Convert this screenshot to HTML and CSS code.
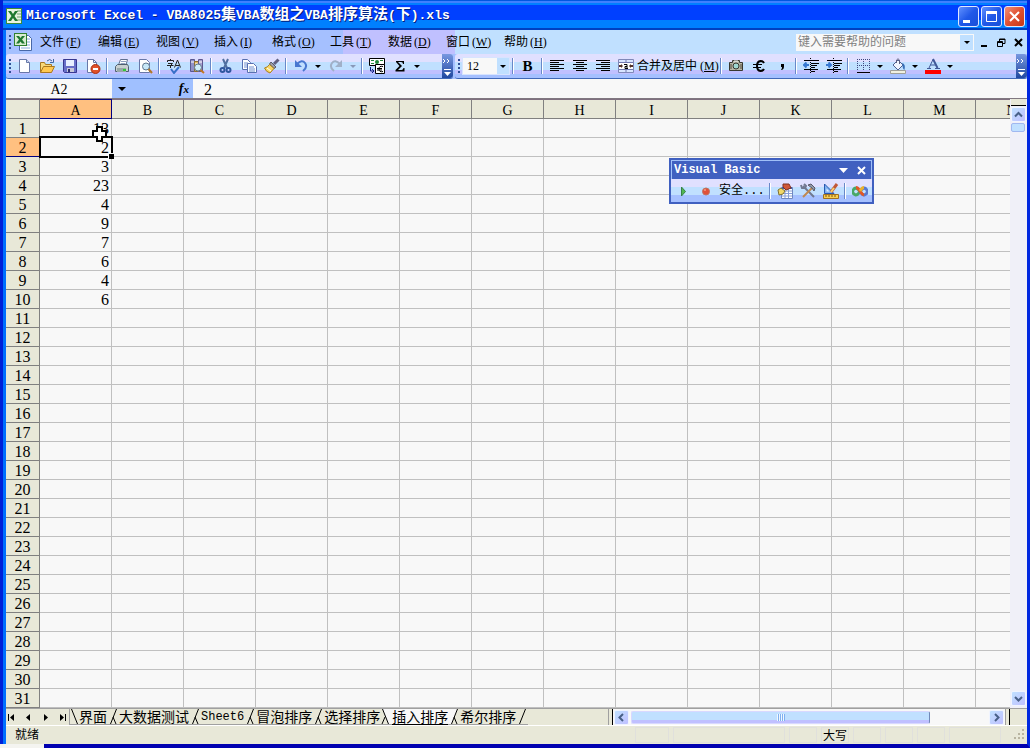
FILE: index.html
```html
<!DOCTYPE html>
<html lang="zh-CN">
<head>
<meta charset="utf-8">
<title>Microsoft Excel</title>
<link rel="stylesheet" href="styles.css">
</head>
<body>
<div class="window">
  <header class="titlebar">
    <svg class="app-icon" width="16" height="16" viewBox="0 0 16 16"><rect x=".5" y=".5" width="15" height="15" fill="#e8f4e0" stroke="#3c8c3c"/><path d="M11 3h4M11 6h4M11 9h4M11 12h4" stroke="#70a070"/><path d="M2 3h3l2 3 2-3h3L8.500 8 12 13H9L7 10l-2 3H2l3.500-5z" fill="#207830"/></svg>
    <h1 class="title">Microsoft Excel - VBA8025<span class="han">集</span>VBA<span class="han">数组之</span>VBA<span class="han">排序算法</span>(<span class="han">下</span>).xls</h1>
    <div class="win-buttons">
      <button class="win-btn" aria-label="最小化"><svg width="19" height="19" viewBox="0 0 19 19"><path d="M4 13h7v3H4z" fill="#fff"/></svg></button>
      <button class="win-btn" aria-label="最大化"><svg width="19" height="19" viewBox="0 0 19 19"><path d="M4.500 5.500h10v9h-10z" fill="none" stroke="#fff"/><path d="M4 4h11v3H4z" fill="#fff"/></svg></button>
      <button class="win-btn close" aria-label="关闭"><svg width="19" height="19" viewBox="0 0 19 19"><path d="M5 5l9 9M14 5l-9 9" stroke="#fff" stroke-width="2"/></svg></button>
    </div>
  </header>

  <nav class="menubar">
    <span class="grip"></span>
    <svg class="doc-icon" width="18" height="18" viewBox="0 0 18 18"><path d="M5.500 2.500h9l3 3v12h-12z" fill="#fff" stroke="#4868a8"/><path d="M12 6h4M12 9h4M12 12h4M7 15h9" stroke="#88a8d8"/><rect x=".5" y=".5" width="12" height="12" fill="#d8ecd0" stroke="#308030"/><path d="M2 3h3l1.500 2L8 3h3L8 6.500l3 4H8L6.500 8.500 5 10.500H2l3-4z" fill="#207830"/></svg>
    <button class="menu">文件<span>(<u>F</u>)</span></button>
    <button class="menu">编辑<span>(<u>E</u>)</span></button>
    <button class="menu">视图<span>(<u>V</u>)</span></button>
    <button class="menu">插入<span>(<u>I</u>)</span></button>
    <button class="menu">格式<span>(<u>O</u>)</span></button>
    <button class="menu">工具<span>(<u>T</u>)</span></button>
    <button class="menu">数据<span>(<u>D</u>)</span></button>
    <button class="menu">窗口<span>(<u>W</u>)</span></button>
    <button class="menu">帮助<span>(<u>H</u>)</span></button>
    <div class="help-box">
      <input type="text" aria-label="帮助" placeholder="键入需要帮助的问题">
      <button class="drop" aria-label="展开"><i class="tri"></i></button>
    </div>
    <div class="doc-buttons">
      <button aria-label="最小化窗口"><svg width="9" height="9"><path d="M1 7h6v2H1z"/></svg></button>
      <button aria-label="还原窗口"><svg width="9" height="9"><path d="M2.500 3V1H8v4.500H6M2.500 1.500H8M.5 3.500h5v5h-5zM.5 4.500h5" fill="none" stroke="#000"/></svg></button>
      <button aria-label="关闭窗口"><svg width="9" height="9"><path d="M1 1l7 7M8 1L1 8" stroke="#000" stroke-width="2"/></svg></button>
    </div>
  </nav>

  <div class="toolbars">
    <div class="toolbar standard">
      <span class="grip"></span>
      <button class="tb" aria-label="新建"><svg width="16" height="16"><path d="M3.500 1.500h7l3 3v10h-10z" fill="#fff" stroke="#6878a8"/><path d="M10.500 1.500v3h3" fill="#c8d8f0" stroke="#6878a8"/></svg></button>
      <button class="tb" aria-label="打开"><svg width="16" height="16"><path d="M1.500 14V4.500h4l1 2h6V14z" fill="#f8d878" stroke="#a87820"/><path d="M1.500 14.500l3-6h11l-3 6z" fill="#ffc850" stroke="#a87820"/><path d="M8 3q3-3 5 0M14.500 1v3.500H11" fill="none" stroke="#4068a0"/></svg></button>
      <button class="tb" aria-label="保存"><svg width="16" height="16"><path d="M1.500 1.500h13v13h-12l-1-1z" fill="#6870c8" stroke="#383890"/><path d="M4 2h8v6H4z" fill="#e8f0ff"/><path d="M5 10h7v4H5z" fill="#c8c8d8"/><path d="M6 11h2v3H6z" fill="#303070"/></svg></button>
      <button class="tb" aria-label="权限"><svg width="16" height="16"><path d="M2.500 1.500h6l3 3v10h-9z" fill="#fff" stroke="#6878a8"/><path d="M8.500 1.500v3h3" fill="none" stroke="#6878a8"/><circle cx="10.500" cy="11" r="4.500" fill="#e05028" stroke="#a83010"/><path d="M8 10h5v2H8z" fill="#fff"/></svg></button>
      <span class="sep"></span>
      <button class="tb" aria-label="打印"><svg width="16" height="16"><path d="M4.500 7l2-5.500h7L12 7z" fill="#fff" stroke="#607090"/><path d="M7 3.500h5M6.500 5.500h5" stroke="#90a0c0"/><path d="M1.500 8.500l2-2h10l1 2v5h-13z" fill="#c8d0d0" stroke="#506070"/><path d="M3 10h9v4H3z" fill="#98a8a8"/><path d="M9 11h3v2H9z" fill="#30c838"/></svg></button>
      <button class="tb" aria-label="打印预览"><svg width="16" height="16"><path d="M2.500 1.500h7l3 3v10h-10z" fill="#fff" stroke="#6878a8"/><circle cx="9" cy="8.500" r="3.500" fill="#c8e8f8" stroke="#607890"/><path d="M11.500 11l3.500 4" stroke="#b07828" stroke-width="2"/></svg></button>
      <span class="sep"></span>
      <button class="tb" aria-label="拼写检查"><svg width="16" height="16"><path d="M1.500 4V2.500h6V4M4.500 1v1.500M2 5.500h4.500l-2 2V10M1 7.500h6.500M8.500 9.500l3-7.500 3 7.500M9.500 7.500h4" fill="none" stroke="#202020"/><path d="M5 11l3 4 5-6" fill="none" stroke="#3870c8" stroke-width="2"/></svg></button>
      <button class="tb" aria-label="信息检索"><svg width="16" height="16"><path d="M1.500 1.500h4v12h-4z" fill="#9090c8" stroke="#585890"/><path d="M5.500 3.500h4v10h-4z" fill="#e0b868" stroke="#907030"/><path d="M9.500 1.500h4v12h-4z" fill="#a8a0d0" stroke="#605890"/><path d="M2 4h3M10 4h3M6 6h3" stroke="#fff"/><circle cx="9" cy="9.500" r="3.500" fill="#d0ecf8" stroke="#607890"/><path d="M11.500 12l3.500 3" stroke="#c07820" stroke-width="2"/></svg></button>
      <span class="sep"></span>
      <button class="tb" aria-label="剪切"><svg width="16" height="16"><path d="M5 1l4 9M10 1L6 10" stroke="#5070a0" stroke-width="2"/><circle cx="4.500" cy="12" r="2" fill="none" stroke="#3058a0" stroke-width="2"/><circle cx="10.500" cy="12" r="2" fill="none" stroke="#3058a0" stroke-width="2"/></svg></button>
      <button class="tb" aria-label="复制"><svg width="16" height="16"><path d="M1.500 1.500h5l3 3v7h-8z" fill="#fff" stroke="#5870b0"/><path d="M3 5h4M3 7h4M3 9h3" stroke="#7090d0"/><path d="M6.500 5.500h6l3 3v6h-9z" fill="#fff" stroke="#5870b0"/><path d="M8 9h5M8 11h6M8 13h6" stroke="#7090d0"/></svg></button>
      <button class="tb" aria-label="格式刷"><svg width="16" height="16"><path d="M14.500 1.500L10 6" stroke="#606080" stroke-width="3"/><path d="M7 4l5 5-2 1.500L5.500 6z" fill="#a0a0a8" stroke="#585868"/><path d="M5.500 6.500l4.500 4-4 4.500q-4-1-5.500-5 3-.5 5-3.500z" fill="#f8d868" stroke="#a88020"/><path d="M3 10l4 3" stroke="#fff"/></svg></button>
      <span class="sep"></span>
      <button class="tb" aria-label="撤消"><svg width="16" height="16"><path d="M4 6q5-5 8-1t-2 8" fill="none" stroke="#4878d0" stroke-width="2"/><path d="M2 2v7h7z" fill="#4878d0"/></svg></button>
      <button class="arrow" aria-label="撤消列表"><i class="tri"></i></button>
      <button class="tb" aria-label="恢复"><svg width="16" height="16"><path d="M12 6q-5-5-8-1t2 8" fill="none" stroke="#a0b0c8" stroke-width="2"/><path d="M14 2v7H7z" fill="#a0b0c8"/></svg></button>
      <button class="arrow" aria-label="恢复列表"><i class="tri dim"></i></button>
      <span class="sep"></span>
      <button class="tb" aria-label="欧元转换"><svg width="16" height="16"><path d="M.5.500h15v7H.500z" fill="#fff" stroke="#000"/><path d="M2 2h3v1H2zM11 2h3v1h-3zM2 5h3v1H2z" fill="#208838"/><circle cx="8" cy="4" r="2" fill="#208838"/><path d="M6.500 6.500h9v9h-9z" fill="#fff" stroke="#000"/><path d="M14 8.500q-4-1-4 2.500t4 2.500M8 10.500h5M8 12h5" fill="none" stroke="#000"/><path d="M1.500 9v4H5M3 11l2 2-2 2" fill="none" stroke="#102080"/></svg></button>
      <button class="tb" aria-label="自动求和"><svg width="16" height="16"><path d="M4 3h8v3h-1q0-2-2-2H6l4 4-4 4h3.500q1.500 0 2-2h1v3.500H3.500V12L7.500 8 4 4z"/></svg></button>
      <button class="arrow" aria-label="求和列表"><i class="tri"></i></button>
      <button class="more" aria-label="工具栏选项"><svg width="10" height="20"><path d="M1 3l2 2-2 2M5 3l2 2-2 2" fill="none" stroke="#fff"/><path d="M2 13h7v1H2zM2 16h7l-3.500 4z" fill="#fff"/></svg></button>
    </div>
    <div class="toolbar format">
      <span class="grip"></span>
      <div class="size-box"><select aria-label="字号"><option>12</option></select><i class="tri"></i></div>
      <span class="sep"></span>
      <button class="tb bold" aria-label="加粗">B</button>
      <span class="sep"></span>
      <button class="tb" aria-label="左对齐"><svg width="16" height="16"><path d="M1 2.500h14M1 4.500h9M1 6.500h14M1 8.500h9M1 10.500h14M1 12.500h9" stroke="#000"/></svg></button>
      <button class="tb" aria-label="居中"><svg width="16" height="16"><path d="M1 2.500h14M4 4.500h8M1 6.500h14M4 8.500h8M1 10.500h14M4 12.500h8" stroke="#000"/></svg></button>
      <button class="tb" aria-label="右对齐"><svg width="16" height="16"><path d="M1 2.500h14M6 4.500h9M1 6.500h14M6 8.500h9M1 10.500h14M6 12.500h9" stroke="#000"/></svg></button>
      <button class="merge"><svg width="16" height="16"><path d="M.5 1.500h15v13H.500z" fill="#d8e4ff" stroke="#8088b8"/><path d="M1 4.500h14M1 11.500h14M8 2v2M8 12v2" stroke="#7078b0"/><path d="M1 5h14v6H1z" fill="#fff"/><path d="M1 7h2V6l2 2-2 2V9H1zM15 7h-2V6l-2 2 2 2V9h2z" fill="#503028"/><path d="M6 6.500h3v4M9 8.500H7v2h3" fill="none" stroke="#000"/></svg>合并及居中<span>(<u>M</u>)</span></button>
      <span class="sep"></span>
      <button class="tb" aria-label="照相机"><svg width="16" height="16"><path d="M1.500 4.500h3v-2h7v2h3v8h-13z" fill="#b8b8a8" stroke="#383830"/><circle cx="8" cy="8" r="3" fill="#a0d8d0" stroke="#383830"/><path d="M6 3h4" stroke="#fff"/><path d="M3 6v5M13 6v5" stroke="#504838"/></svg></button>
      <button class="tb" aria-label="欧元"><svg width="16" height="16"><path d="M13 5Q12 3 9.500 3 6 3.500 6 8t3.500 5q2.500 0 3.500-2" fill="none" stroke="#000" stroke-width="2"/><path d="M2 6.500h9M2 9.500h8" stroke="#000"/></svg></button>
      <button class="tb" aria-label="千位分隔"><svg width="16" height="16"><path d="M7 6h3v3q0 2-2 3H7q1-1 1-3H7z"/></svg></button>
      <span class="sep"></span>
      <button class="tb" aria-label="减少缩进"><svg width="16" height="16"><path d="M1 2.500h15M8 5.500h8M8 7.500h6M8 9.500h4M1 11.500h14M8 13.500h4" stroke="#000"/><path d="M7.500 0v16" stroke="#000" stroke-dasharray="1 1"/><path d="M6 7H1M3.500 4.500L1 7l2.500 2.500" fill="none" stroke="#3878d0" stroke-width="2"/></svg></button>
      <button class="tb" aria-label="增加缩进"><svg width="16" height="16"><path d="M1 2.500h15M8 5.500h8M8 7.500h6M8 9.500h4M1 11.500h14M8 13.500h4" stroke="#000"/><path d="M7.500 0v16" stroke="#000" stroke-dasharray="1 1"/><path d="M0 7h5M2.500 4.500L5 7 2.500 9.500" fill="none" stroke="#3878d0" stroke-width="2"/></svg></button>
      <span class="sep"></span>
      <button class="tb" aria-label="边框"><svg width="16" height="16"><path d="M2 1.500h13M2 7.500h13M2.500 1v12M8.500 1v12M14.500 1v12" stroke="#404880" stroke-dasharray="1 1"/><path d="M2 14.500h13" stroke="#000"/></svg></button>
      <button class="arrow" aria-label="边框列表"><i class="tri"></i></button>
      <button class="tb" aria-label="填充颜色"><svg width="16" height="16"><path d="M3 7l5-5 5 5-5 5z" fill="#f0f4ff" stroke="#506090"/><path d="M6.500 5V2q1.500-2.500 3 0v4" fill="none" stroke="#606080"/><path d="M12 5q4 1 2.500 7-2-1-2-5z" fill="#3870b8"/><path d="M.5 12.500h15v3H.500z" fill="#f0f0e0" stroke="#a0a098"/></svg></button>
      <button class="arrow" aria-label="填充列表"><i class="tri"></i></button>
      <button class="tb" aria-label="字体颜色"><svg width="16" height="16"><path d="M0 12h16v4H0z" fill="#f00"/><path d="M2 10.500h4M10 10.500h5M4 10L8 1.500M5.500 7h5" fill="none" stroke="#405898"/><path d="M8 1l4.500 9" stroke="#405898" stroke-width="2"/></svg></button>
      <button class="arrow" aria-label="字体颜色列表"><i class="tri"></i></button>
      <button class="more" aria-label="工具栏选项"><svg width="10" height="20"><path d="M1 3l2 2-2 2M5 3l2 2-2 2" fill="none" stroke="#fff"/><path d="M2 13h7v1H2zM2 16h7l-3.500 4z" fill="#fff"/></svg></button>
    </div>
  </div>

  <div class="formula-bar">
    <input class="name-box" type="text" value="A2" aria-label="名称框">
    <div class="fx-area">
      <button class="arrow" aria-label="名称列表"><i class="tri big"></i></button>
      <button class="fx" aria-label="插入函数">f<small>x</small></button>
    </div>
    <input class="formula" type="text" value="2" aria-label="编辑栏">
  </div>

  <main class="sheet">
    <div class="grid-wrap"><table class="grid" id="grid"></table></div>
    <div class="vscroll">
      <span class="split"></span>
      <button class="sb" aria-label="向上"><svg width="13" height="13"><path d="M3 8.500L6.500 5 10 8.500" fill="none" stroke="#486088" stroke-width="2"/></svg></button>
      <span class="vthumb"></span>
      <button class="sb last" aria-label="向下"><svg width="13" height="13"><path d="M3 5l3.500 3.500L10 5" fill="none" stroke="#486088" stroke-width="2"/></svg></button>
    </div>
    <section class="vb">
      <div class="vb-title"><h2>Visual Basic</h2><button aria-label="选项"><svg width="9" height="9"><path d="M0 2h9L4.500 7z" fill="#fff"/></svg></button><button aria-label="关闭"><svg width="9" height="9"><path d="M1 1l7 7M8 1L1 8" stroke="#fff" stroke-width="2"/></svg></button></div>
      <div class="vb-tools">
        <button class="tb" aria-label="运行宏"><svg width="16" height="16"><path d="M6.500 4v9l4-4.500z" fill="#50b850" stroke="#388048"/></svg></button>
        <button class="tb" aria-label="录制宏"><svg width="16" height="16"><circle cx="8" cy="8.500" r="3.500" fill="#e05038" stroke="#c07060"/><path d="M6 7h2" stroke="#ffc0a8"/></svg></button>
        <button class="safety">安全...</button>
        <span class="sep"></span>
        <button class="tb" aria-label="编辑器"><svg width="16" height="16"><path d="M4.500 4.500h11v11h-11z" fill="#fff" stroke="#7088c0"/><path d="M5 8h10M5 10.500h10M5 13h10M8 6v9M11.500 6v9" stroke="#88a0d8"/><path d="M5 4h10v2H5z" fill="#4060b0"/><path d="M6 1h6l2 4-5 2-3-3z" fill="#d05838" stroke="#803020"/><path d="M1 7l3-2 4 3-2 3-4 1z" fill="#f0d868" stroke="#807030"/></svg></button>
        <button class="tb" aria-label="控件工具箱"><svg width="16" height="16"><path d="M3 3l11 11" stroke="#707890" stroke-width="2"/><path d="M1 2l1 3h3l1-2-2-2" fill="none" stroke="#707890" stroke-width="2"/><path d="M12 5L3 14" stroke="#c08850" stroke-width="2"/><path d="M8 2l3-1 4 4-1 3-2-3z" fill="#9098a8" stroke="#585868"/></svg></button>
        <button class="tb" aria-label="设计模式"><svg width="16" height="16"><path d="M1.500 1v9.500H11z" fill="#80b0f0" stroke="#2858b0"/><path d="M3.500 5.500v3h3z" fill="#e0f0ff"/><path d="M.5 11.500h15v4H.500z" fill="#f8d050" stroke="#a07020"/><path d="M3 12v2M6 12v2M9 12v2M12 12v2" stroke="#805010"/><path d="M14 1L8 9" stroke="#c05838" stroke-width="3"/><path d="M11 5L8 9" stroke="#f8d070" stroke-width="2"/></svg></button>
        <span class="sep"></span>
        <button class="tb" aria-label="脚本编辑器"><svg width="16" height="16"><path d="M8 8.500Q4 3 1.500 6.500t2 5.500Q6 12 8 8.500" fill="none" stroke="#48a868" stroke-width="3"/><path d="M8 8.500Q12 3 14.500 6.500t-2 5.500Q10 12 8 8.500" fill="none" stroke="#5878d0" stroke-width="3"/><path d="M4 4.500Q6 4.500 8 8t4 4" fill="none" stroke="#e05828" stroke-width="3"/><path d="M12 4.500Q10 4.500 8 8" fill="none" stroke="#e8b030" stroke-width="3"/></svg></button>
      </div>
    </section>
  </main>

  <div class="tabs-row">
    <div class="tabs">
      <div class="tab-nav">
        <button aria-label="第一张"><svg width="9" height="9"><path d="M1 1h1v7H1zM7 1v7L3 4.500z"/></svg></button>
        <button aria-label="上一张"><svg width="9" height="9"><path d="M6 1v7L2 4.500z"/></svg></button>
        <button aria-label="下一张"><svg width="9" height="9"><path d="M3 1v7l4-3.500z"/></svg></button>
        <button aria-label="最后一张"><svg width="9" height="9"><path d="M2 1v7l4-3.500zM7 1h1v7H7z"/></svg></button>
      </div>
      <svg class="edge" width="9" height="16"><path d="M1.500 0l6 15" stroke="#000"/></svg>
      <button class="tab">界面</button>
      <svg class="edge" width="12" height="16"><path d="M9.500 0l-6 15M6 8l3 7" stroke="#000"/></svg>
      <button class="tab">大数据测试</button>
      <svg class="edge" width="12" height="16"><path d="M9.500 0l-6 15M6 8l3 7" stroke="#000"/></svg>
      <button class="tab latin">Sheet6</button>
      <svg class="edge" width="12" height="16"><path d="M9.500 0l-6 15M6 8l3 7" stroke="#000"/></svg>
      <button class="tab">冒泡排序</button>
      <svg class="edge" width="12" height="16"><path d="M9.500 0l-6 15M6 8l3 7" stroke="#000"/></svg>
      <button class="tab">选择排序</button>
      <svg class="edge" width="12" height="16"><path d="M2 0h10v15H8.500z" fill="#f8f8f8"/><path d="M2.500 0l6 15M5 8l-3 7" stroke="#000"/></svg>
      <button class="tab active">插入排序</button>
      <svg class="edge" width="12" height="16"><path d="M0 0h9.500l-6 15H0z" fill="#f8f8f8"/><path d="M9.500 0l-6 15M6 8l3 7" stroke="#000"/></svg>
      <button class="tab">希尔排序</button>
      <svg class="edge" width="12" height="16"><path d="M9.500 0l-6 15" stroke="#000"/></svg>
    </div>
    <div class="hscroll">
      <span class="hsplit"></span>
      <button class="sb" aria-label="向左"><svg width="13" height="13"><path d="M8 3L4.500 6.500 8 10" fill="none" stroke="#486088" stroke-width="2"/></svg></button>
      <div class="htrack"><span class="hthumb"><i></i></span></div>
      <button class="sb" aria-label="向右"><svg width="13" height="13"><path d="M5 3l3.500 3.500L5 10" fill="none" stroke="#486088" stroke-width="2"/></svg></button>
      <span class="hsplit"></span>
    </div>
    <span class="corner"></span>
  </div>

  <footer class="status">
    <span class="ready">就绪</span>
    <span class="cell narrow"></span><span class="cell wide"></span><span class="cell"></span><span class="cell">大写</span><span class="cell"></span><span class="cell"></span><span class="cell"></span><span class="cell mid"></span>
    <svg width="12" height="12"><path d="M9 0h2v2H9zM5 4h2v2H5zM9 4h2v2H9zM1 8h2v2H1zM5 8h2v2H5zM9 8h2v2H9z" fill="#b8b4a0"/></svg>
  </footer>
  <div class="underlay"></div>
</div>
<script src="grid.js"></script>
</body>
</html>
```
FILE: styles.css
```css
* { box-sizing: border-box; }
body {
  margin: 0;
  font: 12px/16px "Liberation Serif", "Noto Sans CJK SC", serif;
  color: #000;
  overflow: hidden;
}
button, input, select {
  font: inherit;
  color: inherit;
  margin: 0;
  padding: 0;
  border: 0;
  border-radius: 0;
  background: none;
  outline: none;
}
svg { display: block; flex: none; }
.window {
  position: relative;
  display: flex;
  flex-direction: column;
  height: 100vh;
  border-style: solid;
  border-color: #0040ff #0028e0 #0000b0 #0020d8;
  border-width: 0 3px 4px 3px;
  background: #0070ff;
}
.menubar, .toolbars, .formula-bar, .sheet, .tabs-row, .status { margin-left: 3px; }

.titlebar {
  display: flex;
  align-items: center;
  height: 30px;
  padding: 2px 2px 0 3px;
  background: linear-gradient(#0058e0 1px, #4080ff 1px 3px, #0080ff 3px 5px, #0040ff 5px 20px, #0080ff 20px 28px, #0040c0 28px);
}
.title {
  flex: 1;
  margin: 0;
  padding-left: 4px;
  font: bold 13px/20px "Liberation Mono", "Noto Sans CJK SC", monospace;
  color: #fff;
  text-shadow: 1px 1px #002080;
  white-space: nowrap;
}
.han { font-size: 15px; line-height: 18px; }
.win-buttons { display: flex; gap: 2px; }
.win-btn {
  width: 21px;
  height: 21px;
  border: 1px solid #e0e8ff;
  border-radius: 3px;
  background: linear-gradient(135deg, #6090ff, #2058e8 50%, #1850d8);
}
.win-btn.close { background: linear-gradient(135deg, #f09078, #e05030 50%, #c83818); }

.menubar {
  display: flex;
  align-items: center;
  height: 24px;
  padding-right: 4px;
  background: linear-gradient(90deg, #a5c0ff 33%, #c0c0ff 33% 44%, #c0e0ff 44%);
}
.grip {
  width: 2px;
  height: 14px;
  margin: 0 1px 0 3px;
  flex: none;
  background: repeating-linear-gradient(#305098 0 2px, transparent 2px 4px);
}
.doc-icon { margin: 0 0 0 2px; }
.menu { flex: none; width: 58px; display: flex; gap: 2px; padding-left: 8px; }
.help-box { display: flex; margin-left: auto; width: 178px; height: 17px; background: #f8f8f8; }
.help-box input { flex: 1; min-width: 0; padding-left: 2px; }
.help-box input::placeholder { color: #808080; opacity: 1; }
.drop { width: 13px; margin: 1px; background: #c0e0ff; display: grid; place-items: center; }
.tri {
  display: block;
  border: 3px solid transparent;
  border-top-color: #000;
  border-bottom: 0;
}
.tri.dim { border-top-color: #8898b8; }
.tri.big { border-width: 4px 4px 0; }
.doc-buttons { display: flex; gap: 8px; padding: 0 0 0 6px; }

.toolbars { display: flex; height: 25px; background: #a5c0ff; }
.toolbar {
  display: flex;
  align-items: center;
  height: 25px;
  border-bottom: 1px solid #4068b8;
  border-radius: 3px;
  background: linear-gradient(#e0e0ff 8px, #c0e0ff 8px 16px, #c0c0ff 16px 20px, #a5c0ff 20px);
}
.standard { flex: 0 0 447px; }
.format { flex: 1; margin-left: 2px; }
.tb { width: 23px; height: 22px; flex: none; display: grid; place-items: center; }
.bold { font: 900 15px/20px "Liberation Serif", serif; }
.arrow { width: 12px; height: 22px; display: grid; place-items: center; flex: none; }
.fx-area .arrow { height: 19px; }
.sep { width: 6px; height: 16px; flex: none; background: linear-gradient(90deg, transparent 2px, #6888c8 2px 3px, #fff 3px 4px, transparent 4px); }
.more { width: 11px; height: 24px; margin-left: auto; border-radius: 0 3px 3px 0; background: linear-gradient(#7898e0, #2048a0); }
.size-box { position: relative; width: 48px; height: 18px; margin-left: 1px; background: #f8f8f8; border: 1px solid #d8e4ff; display: flex; align-items: center; }
.size-box select { appearance: none; width: 100%; height: 16px; padding-left: 4px; }
.size-box .tri { position: absolute; right: 3px; z-index: 1; pointer-events: none; }
.size-box::after { content: ""; position: absolute; right: 0; top: 0; bottom: 0; width: 12px; background: #c0e0ff; pointer-events: none; }
.merge { display: flex; align-items: center; gap: 3px; width: 104px; padding-left: 4px; white-space: nowrap; }

.formula-bar { display: flex; height: 19px; background: #f8f8f8; }
.name-box { width: 106px; padding-top: 2px; text-align: center; font-size: 14px; }
.fx-area { width: 81px; padding: 0 4px; display: flex; justify-content: space-between; align-items: center; background: #a0c0ff; }
.fx { font: italic bold 14px/16px "Liberation Serif", serif; }
.fx small { font-size: 11px; }
.formula { flex: 1; padding: 2px 0 0 11px; font-size: 16px; }

.sheet { position: relative; display: flex; flex: 1; min-height: 0; background: #f8f8f8; border-top: 1px solid #807880; }
.grid-wrap { flex: 1; min-width: 0; overflow: hidden; }
.grid { border-collapse: separate; border-spacing: 0; table-layout: fixed; width: 1042px; font-size: 16px; line-height: 16px; }
.grid col { width: 72px; }
.grid col.rows { width: 34px; }
.grid th, .grid td { padding: 2px 0 0; height: 19px; border: solid #c0c0c0; border-width: 0 1px 1px 0; }
.grid th { font-weight: normal; background: #e8e8d8; border-color: #808080; }
.grid thead th { height: 20px; padding-top: 3px; font-size: 14px; line-height: 15px; border-top: 1px solid #807080; }
.grid th.on { background: #ffc080; border-color: #000080; }
.grid td { text-align: right; padding-right: 2px; }
.grid td.anchor { position: relative; }
.cursor { position: absolute; right: 4px; top: 7px; z-index: 2; }
.select-frame { position: absolute; inset: -2px -2px -2px -1px; border: 2px solid #000; z-index: 1; }
.select-frame::after { content: ""; position: absolute; right: -3px; bottom: -3px; width: 5px; height: 5px; background: #000; border: solid #f8f8f8; border-width: 1px 0 0 1px; }

.vscroll { width: 17px; padding: 0 1px 1px 0; display: flex; flex-direction: column; align-items: center; background: #f0f0f8; }
.split { width: 15px; height: 7px; background: #e8e8d8; border-bottom: 1px solid #000; }
.sb { width: 15px; height: 15px; flex: none; margin: 1px; border: 1px solid #f0f4ff; border-radius: 2px; background: linear-gradient(135deg, #c0e0ff, #c0c0ff); }
.sb.last { margin-top: auto; }
.vthumb { width: 14px; height: 9px; border: 1px solid #a0b8f0; border-radius: 2px; background: #c0e0ff; }

.vb { position: absolute; left: 663px; top: 59px; width: 205px; border: 2px solid #4060c0; background: #4060c0; }
.vb-title { display: flex; align-items: center; gap: 9px; height: 19px; padding: 0 5px 0 2px; color: #fff; border: 1px solid #a0c0f8; border-bottom: 0; }
.vb-title h2 { flex: 1; margin: 0; font: bold 12px/16px "Liberation Mono", monospace; }
.vb-tools { display: flex; align-items: center; height: 23px; background: linear-gradient(#e0e0ff 8px, #c0e0ff 8px 16px, #a5c0ff 16px); }
.safety { width: 50px; padding-left: 2px; flex: none; text-align: left; font-family: "Liberation Mono", "Noto Sans CJK SC", monospace; }

.tabs-row { display: flex; height: 17px; background: #e8e8d8; border-top: 1px solid #a0a0a0; }
.tabs { display: flex; flex: 0 0 59%; }
.tab-nav { display: flex; gap: 8px; align-items: center; width: 64px; flex: none; padding: 0 0 0 1px; border-right: 1px solid #a0a0a0; }
.edge { border-bottom: 1px solid #a0a0a0; }
.tab { flex: none; height: 16px; font: 14px/15px "Noto Sans CJK SC", sans-serif; border-bottom: 1px solid #a0a0a0; white-space: nowrap; }
.tab.latin { padding-top: 1px; font: 12px/14px "Liberation Mono", monospace; }
.tab.active { background: #f8f8f8; border-bottom-color: #000; }
.hscroll { display: flex; flex: 1; align-items: center; background: #f8f8f8; }
.hsplit { width: 5px; height: 16px; background: #e8e8d8; border-right: 1px solid #000; box-shadow: inset 1px 0 #a0a0a0; }
.htrack { flex: 1; height: 15px; padding: 1px; display: flex; }
.hthumb { width: 84%; border: 1px solid #d8d8ff; border-right-color: #7088b8; border-radius: 2px; background: linear-gradient(#c0e0ff 70%, #c0c0ff 70%); display: grid; place-items: center; }
.hthumb i { width: 8px; height: 7px; background: repeating-linear-gradient(90deg, #f0f8ff 0 1px, #80b0f0 1px 2px); }
.corner { width: 17px; }

.status { display: flex; align-items: center; gap: 4px; height: 19px; padding-right: 2px; background: #e8e8d8; border-top: 1px solid #fff; }
.ready { flex: 1; padding-left: 9px; }
.cell { width: 28px; height: 16px; border: 1px solid #e0e0dc; line-height: 16px; white-space: nowrap; display: flex; justify-content: center; }
.cell.narrow { width: 34px; }
.cell.wide { width: 112px; }
.cell.mid { width: 52px; margin-right: 8px; }
.underlay { position: absolute; left: -3px; bottom: -4px; width: 44px; height: 4px; background: #f4f4f0; }
```
FILE: grid.js
```js
const columns = "ABCDEFGHIJKLMN".split("");
const values = [13, 2, 3, 23, 4, 9, 7, 6, 4, 6];
const selected = { row: 2, column: "A" };
const crossCursor = '<svg class="cursor" width="15" height="16" viewBox="0 0 15 16"><path d="M5 1h5v4h4v6h-4v4H5v-4H1V5h4z" fill="#fff" stroke="#000" stroke-width="2"/></svg>';

let html = '<colgroup><col class="rows">' + "<col>".repeat(columns.length) + "</colgroup><thead><tr><th></th>";
for (const c of columns) {
  html += `<th scope="col"${c === selected.column ? ' class="on"' : ""}>${c}</th>`;
}
html += "</tr></thead><tbody>";
for (let r = 1; r <= 31; r++) {
  html += `<tr><th scope="row"${r === selected.row ? ' class="on"' : ""}>${r}</th>`;
  for (const c of columns) {
    const isA = c === "A";
    const text = isA && values[r - 1] !== undefined ? values[r - 1] : "";
    const extra = isA && r === 1 ? crossCursor : isA && r === selected.row ? '<span class="select-frame"></span>' : "";
    html += `<td${extra ? ' class="anchor"' : ""}>${text}${extra}</td>`;
  }
  html += "</tr>";
}
document.getElementById("grid").innerHTML = html + "</tbody>";
```
